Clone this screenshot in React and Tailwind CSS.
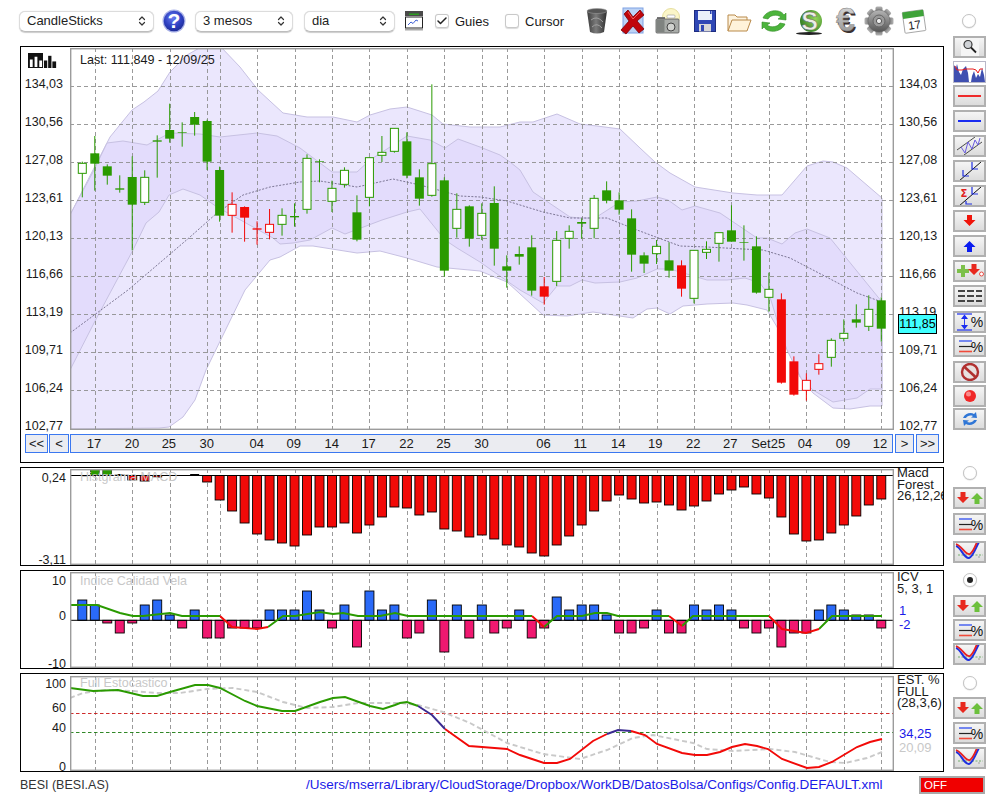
import React from "react";
import { ChevronsUpDown, Check } from "lucide-react";

const GREEN = "#2a9a00";
const RED = "#f20a08";
const barX = (i) => 82.3 + 12.484 * i;

// candles as read at 3x: wick top, body top, body bottom, wick bottom, kind
const rawA = [
  [305,310,340,412,"gh"],[228,280,311,392,"gf"],[313,319,347,374,"gf"],[346,385,389,398,"gf"],
  [289,351,434,571,"gf"],[331,352,427,435,"gh"],[226,241,245,353,"gf"],[131,210,236,248,"gf"],
  [187,216,218,260,"gf"],[156,171,194,227,"gf"],[179,183,305,330,"gf"],[320,330,467,485,"gf"],
  [397,433,466,518,"rh"],[439,441,473,545,"rf"],[484,505,509,554,"rf"],[447,493,517,538,"rh"],
  [445,466,493,527,"gh"],[430,468,472,500,"gf"],[283,295,448,461,"gh"],[298,303,305,367,"gf"],
  [362,385,424,456,"gh"],[322,331,373,383,"gh"],[406,457,539,544,"gf"],[292,293,412,439,"gh"],
  [228,277,286,306,"gh"],[205,205,274,278,"gh"],[217,244,347,355,"gf"],[328,352,416,437,"gf"],
  [73,311,406,410,"gh"],[352,361,632,650,"gf"],[400,448,505,533,"gh"],[436,439,536,560,"gf"],
].map((c) => [60 + c[0] / 3, 60 + c[1] / 3, 60 + c[2] / 3, 60 + c[3] / 3, c[4]]);

const rawB = [
  [130,160,226,240,"gh"],[79,129,266,317,"gf"],[286,319,332,383,"gf"],[259,282,290,314,"gf"],
  [226,262,392,407,"gf"],[351,379,410,434,"rf"],[213,241,364,378,"gh"],[196,214,235,266,"gh"],
  [175,186,191,236,"gf"],[105,115,205,235,"gh"],[64,91,122,130,"gf"],[97,121,149,164,"gf"],
  [148,175,284,335,"gf"],[277,286,311,339,"gf"],[240,259,281,312,"gh"],[247,301,332,353,"gf"],
  [301,316,386,410,"rf"],[270,271,415,430,"gh"],[244,268,277,297,"gh"],[217,218,250,305,"gh"],
  [136,211,245,245,"gf"],[196,246,248,302,"gf"],[229,259,398,401,"gf"],[338,388,412,455,"gh"],
  [400,418,668,671,"rf"],[589,604,704,707,"rf"],[640,661,691,722,"rh"],[583,611,628,644,"rh"],
  [535,541,592,620,"gh"],[478,520,535,544,"gh"],[433,478,488,503,"gf"],[406,448,499,513,"gh"],
  [412,421,506,545,"gf"],
].map((c) => [160 + c[0] / 3, 160 + c[1] / 3, 160 + c[2] / 3, 160 + c[3] / 3, c[4]]);

const candles = [...rawA, ...rawB];

const outerUp = [[70,215],[93,170],[110,137],[132,110],[144,102],[158,91],[170,72],[187,55],[203,46],[220,46],[240,67],[258,90],[283,113],[307,117],[333,117],[357,122],[370,115],[390,109],[407,107],[432,115],[443,124],[470,127],[500,127],[520,122],[533,122],[557,114],[580,124],[597,126],[620,129],[640,148],[655,162],[670,173],[695,187],[733,193],[757,195],[782,195],[807,166],[823,161],[833,162],[847,168],[882,198]];
const outerLow = [[70,429],[159,428],[169,427],[183,417],[195,400],[206,370],[245,290],[270,260],[280,257],[300,246],[313,246],[357,253],[380,251],[407,258],[437,267],[480,271],[507,282],[543,315],[567,316],[593,312],[633,318],[647,309],[657,308],[670,314],[683,306],[707,304],[733,303],[747,305],[767,310],[777,327],[800,377],[813,393],[833,408],[850,409],[870,406],[882,406]];
const innerUp = [[70,215],[93,172],[107,143],[123,141],[147,145],[170,133],[200,134],[220,137],[257,133],[277,136],[300,148],[332,172],[357,172],[370,160],[407,136],[430,140],[445,148],[458,139],[480,147],[500,155],[510,162],[520,170],[533,192],[570,217],[580,218],[595,218],[620,202],[637,201],[657,197],[668,200],[682,210],[695,206],[720,213],[757,238],[767,238],[782,244],[795,233],[807,229],[830,238],[882,302]];
const innerLow = [[70,370],[94,323],[133,250],[146,223],[159,212],[169,195],[183,189],[200,195],[217,207],[273,238],[280,244],[293,243],[310,240],[332,228],[345,234],[382,220],[407,212],[420,209],[445,240],[457,248],[480,262],[507,281],[520,290],[543,303],[557,286],[570,286],[582,280],[595,283],[620,282],[637,278],[657,269],[670,269],[690,275],[707,280],[727,280],[745,278],[760,283],[770,297],[777,320],[787,350],[802,380],[813,390],[833,402],[857,398],[870,389],[882,389]];
const midLine = [[70,333],[128,290],[190,237],[217,213],[243,195],[270,187],[300,182],[320,181],[357,187],[393,179],[420,185],[460,196],[480,197],[507,201],[543,212],[570,218],[607,218],[637,230],[680,246],[707,247],[743,249],[763,250],[790,258],[813,270],[857,293],[882,302]];

const pts = (a) => a.map((p) => p.join(",")).join(" ");
const loop = (a, b) => pts([...a, ...[...b].reverse()]);

const gridX = [1,4,7,10,11,14,17,20,23,26,29,32,34,37,40,43,46,49,52,55,58,61,64].map((i) => Math.round(barX(i)) + 0.5);

const macd = [475,469,469,474,480,481,477,475,475,474,482,500,511,523,534,540,543,546,535,527,527,523,533,525,517,507,508,515,512,529,531,537,535,539,545,547,553,556,545,536,525,511,501,495,499,503,502,505,510,506,501,494,490,487,494,498,517,534,541,540,533,525,516,505,499];
const icv = [600,605,623,633,623,605,600,615,628,610,638,638,628,628,628,610,610,610,591,610,628,605,647,591,610,605,638,633,600,652,605,638,605,633,628,610,638,628,597,610,605,605,615,633,633,628,610,633,633,605,610,605,610,628,633,628,647,633,633,610,605,610,615,615,628];

const icvGreen = [
  [[70,605],[97,605],[120,613],[133,616],[143,616],[170,613],[182,616],[220,616]],
  [[268,627],[283,616],[295,616],[320,612],[333,614],[343,613],[358,616],[380,616],[395,613],[408,616],[532,616]],
  [[544,627],[557,616],[582,616],[595,613],[607,613],[618,616],[669,616]],
  [[682,626],[693,616],[769,616]],
  [[819,629],[832,616],[882,616]],
];
const icvRed = [
  [[220,616],[232,627],[257,629],[268,627]],
  [[532,616],[544,627]],
  [[669,616],[682,626]],
  [[769,616],[782,629],[806,633],[819,629]],
];

const stochGray = [[70,698],[83,693],[107,690],[132,691],[157,693],[180,693],[207,689],[233,688],[257,692],[283,702],[307,708],[333,707],[358,703],[383,703],[400,703],[418,705],[443,712],[470,723],[507,743],[543,754],[580,759],[607,750],[633,738],[653,735],[693,743],[707,749],[733,751],[770,749],[795,752],[830,762],[845,763],[867,758],[882,752]];
const stochGreen = [[70,688],[93,691],[118,690],[143,696],[157,696],[170,692],[195,685],[208,685],[220,688],[245,701],[257,706],[282,711],[295,711],[320,702],[333,698],[345,697],[370,706],[383,709],[395,705],[400,703],[407,702],[418,706]];
const stochBlue1 = [[418,706],[432,715],[445,729]];
const stochRed1 = [[445,729],[469,746],[482,747],[507,749],[520,755],[544,763],[557,763],[570,759],[593,741],[607,734]];
const stochBlue2 = [[607,734],[618,730],[631,731]];
const stochRed2 = [[631,731],[645,735],[657,744],[682,753],[695,755],[707,755],[720,752],[732,747],[745,744],[757,746],[768,749],[782,759],[807,768],[819,767],[832,762],[857,747],[870,742],[882,739]];

const dates = [["17",94],["20",132],["25",169],["30",207],["04",257],["09",294],["14",332],["17",369],["22",407],["25",444],["30",482],["06",544],["11",581],["14",619],["19",656],["22",694],["27",731],["Set25",769],["04",806],["09",844],["12",881]];
const prices = ["134,03","130,56","127,08","123,61","120,13","116,66","113,19","109,71","106,24","102,77"];

function VGrid({ y1, y2 }) {
  return gridX.map((x, i) => (
    <line key={i} x1={x} x2={x} y1={y1} y2={y2} stroke="#8f8f8f" strokeWidth="0.9" strokeDasharray="4 3" />
  ));
}

function MainPlot() {
  return (
    <svg viewBox="70 48 824 382" className="block w-[824px] h-[382px]">
      <polygon points={loop(outerUp, outerLow)} fill="#ebe7fd" stroke="#c7c1e2" />
      <polygon points={loop(innerUp, innerLow)} fill="#e3dcfc" stroke="#c7c1e2" />
      {[86,124,162,200,238,276,314,352,390].map((y) => (
        <line key={y} x1="70" x2="894" y1={y + 0.5} y2={y + 0.5} stroke="#8f8f8f" strokeWidth="0.9" strokeDasharray="4 3" />
      ))}
      <VGrid y1={48} y2={430} />
      <polyline points={pts(midLine)} fill="none" stroke="#6f6a88" strokeWidth="0.9" strokeDasharray="2 1.5" />
      {candles.map((c, i) => {
        const x = barX(i);
        const color = c[4][0] === "g" ? GREEN : RED;
        const hollow = c[4][1] === "h";
        return (
          <g key={i}>
            <line x1={x} x2={x} y1={c[0]} y2={c[3]} stroke={color} strokeWidth="1" />
            {hollow ? (
              <rect x={x - 4} y={c[1]} width="8" height={c[2] - c[1]} fill="#fff" stroke={color} strokeWidth="1" />
            ) : (
              <rect x={x - 4.5} y={c[1]} width="9" height={c[2] - c[1]} fill={color} />
            )}
          </g>
        );
      })}
      <rect x="70.7" y="48.7" width="822.6" height="380.6" fill="none" stroke="#9c9c9c" strokeWidth="1.4" />
    </svg>
  );
}

function MacdPlot() {
  return (
    <svg viewBox="70 469 824 96" className="block w-[824px] h-[96px]">
      <VGrid y1={469} y2={565} />
      {macd.map((y, i) => {
        const x = barX(i) - 4.5;
        if (y === 475) return null;
        if (y === 474) return <rect key={i} x={x} y="474" width="9" height="1.5" fill="#000" />;
        if (y < 475) return <rect key={i} x={x} y={y} width="9" height={475.5 - y} fill={GREEN} stroke="#111" strokeWidth="0.5" />;
        return <rect key={i} x={x} y="475.5" width="9" height={y - 475.5} fill={RED} stroke="#000" strokeWidth="0.9" />;
      })}
      <line x1="70" x2="894" y1="475.5" y2="475.5" stroke="#000" strokeWidth="1" />
      <rect x="70.7" y="469.7" width="822.6" height="94.6" fill="none" stroke="#9c9c9c" strokeWidth="1.4" />
    </svg>
  );
}

function IcvPlot() {
  return (
    <svg viewBox="70 572 824 96" className="block w-[824px] h-[96px]">
      <VGrid y1={572} y2={668} />
      {icv.map((y, i) => {
        const x = barX(i) - 4.5;
        return y < 620 ? (
          <rect key={i} x={x} y={y} width="9" height={620.3 - y} fill="#2a6af8" stroke="#000" strokeWidth="0.9" />
        ) : (
          <rect key={i} x={x} y="620.3" width="9" height={y - 620.3} fill="#f01870" stroke="#000" strokeWidth="0.9" />
        );
      })}
      <line x1="70" x2="894" y1="620.3" y2="620.3" stroke="#000" strokeWidth="1" />
      {icvGreen.map((l, i) => (
        <polyline key={i} points={pts(l)} fill="none" stroke={GREEN} strokeWidth="1.9" />
      ))}
      {icvRed.map((l, i) => (
        <polyline key={i} points={pts(l)} fill="none" stroke={RED} strokeWidth="1.9" />
      ))}
      <rect x="70.7" y="572.7" width="822.6" height="94.6" fill="none" stroke="#9c9c9c" strokeWidth="1.4" />
    </svg>
  );
}

function StochPlot() {
  return (
    <svg viewBox="70 676 824 95" className="block w-[824px] h-[95px]">
      <VGrid y1={676} y2={771} />
      <line x1="70" x2="894" y1="713.5" y2="713.5" stroke="#c81414" strokeWidth="0.9" strokeDasharray="3.5 2.5" />
      <line x1="70" x2="894" y1="732.5" y2="732.5" stroke="#1a7a10" strokeWidth="0.9" strokeDasharray="3.5 2.5" />
      <polyline points={pts(stochGray)} fill="none" stroke="#c9c9c9" strokeWidth="1.9" strokeDasharray="5 3" />
      <polyline points={pts(stochGreen)} fill="none" stroke={GREEN} strokeWidth="1.9" />
      <polyline points={pts(stochBlue1)} fill="none" stroke="#3a2a90" strokeWidth="1.9" />
      <polyline points={pts(stochRed1)} fill="none" stroke={RED} strokeWidth="1.9" />
      <polyline points={pts(stochBlue2)} fill="none" stroke="#3a2a90" strokeWidth="1.9" />
      <polyline points={pts(stochRed2)} fill="none" stroke={RED} strokeWidth="1.9" />
      <rect x="70.7" y="676.7" width="822.6" height="93.6" fill="none" stroke="#9c9c9c" strokeWidth="1.4" />
    </svg>
  );
}

function DateBar() {
  const cells = dates.map((d, i) => {
    const left = i === 0 ? 70 : (dates[i - 1][1] + d[1]) / 2;
    const right = i === dates.length - 1 ? 893 : (d[1] + dates[i + 1][1]) / 2;
    return { label: d[0], x: d[1], left, right };
  });
  return (
    <div className="ml-px w-[823px] h-[19px] border border-[#3b78f0] bg-[#ebecf1] flex">
      {cells.map((c, i) => {
        // keep the label centred on its tick even where the cell is not symmetric
        const half = Math.min(c.x - c.left, c.right - c.x);
        return (
          <React.Fragment key={i}>
            <span style={{ width: c.x - c.left - half - (i === 0 ? 1 : 0) }} />
            <span style={{ width: half * 2 }} className="text-center leading-[18px]">{c.label}</span>
            <span style={{ width: c.right - c.x - half }} />
          </React.Fragment>
        );
      })}
    </div>
  );
}

function NavBtn({ className, children }) {
  return (
    <div className={`h-[19px] border border-[#3b78f0] bg-[#ebecf1] text-center leading-[18px] ${className}`}>{children}</div>
  );
}

function Select({ className, children }) {
  return (
    <div className={`h-[21px] flex items-center justify-between pl-[7px] pr-[5px] bg-white border border-[#dcdcdc] border-b-[#bdbdbd] rounded-[6px] shadow-[0_0.5px_1px_rgba(0,0,0,0.2)] text-[#222] ${className}`}>
      <span>{children}</span>
      <ChevronsUpDown size={12} strokeWidth={2.4} className="text-[#333]" />
    </div>
  );
}

function CheckBox({ on }) {
  return (
    <div className="w-[14px] h-[14px] rounded-[3px] bg-white border border-[#c9c9c9] shadow-[0_0.5px_1px_rgba(0,0,0,0.15)] flex items-center justify-center">
      {on && <Check size={12} strokeWidth={3} className="text-[#222]" />}
    </div>
  );
}

function Radio({ on, className }) {
  return (
    <div className={`w-[14px] h-[14px] rounded-full bg-white border border-[#c4c4c4] shadow-[0_0.5px_1px_rgba(0,0,0,0.15)] flex items-center justify-center ${className}`}>
      {on && <div className="w-[6px] h-[6px] rounded-full bg-[#222]" />}
    </div>
  );
}

/* ---- toolbar icons ---- */
function HelpIcon() {
  return (
    <svg viewBox="0 0 24 24" className="ml-[8px] w-[24px] h-[24px] shrink-0">
      <defs>
        <radialGradient id="helpG" cx="45%" cy="35%" r="70%">
          <stop offset="0%" stopColor="#6a7cf0" />
          <stop offset="60%" stopColor="#2d3fc0" />
          <stop offset="100%" stopColor="#1c2a90" />
        </radialGradient>
      </defs>
      <circle cx="12" cy="12" r="11.5" fill="#a9b2e8" />
      <circle cx="12" cy="12" r="10.3" fill="url(#helpG)" />
      <text x="12" y="19" textAnchor="middle" fontSize="21" fontWeight="700" fill="#fff" fontFamily="Liberation Sans">?</text>
    </svg>
  );
}

function ChartWinIcon() {
  return (
    <svg viewBox="0 0 18 20" className="ml-[10px] w-[18px] h-[20px] shrink-0">
      <rect x="0" y="0" width="18" height="5" fill="#4a4a4a" />
      <rect x="4" y="2.5" width="10" height="1.5" fill="#2c9c20" />
      <rect x="0.5" y="6" width="17" height="11" fill="#fff" stroke="#222" />
      <polyline points="3,14 6,11 8,12.5 11,9 13,10" fill="none" stroke="#2a4fd0" strokeWidth="0.9" />
      <rect x="0" y="18" width="18" height="1.5" fill="#aaa" />
    </svg>
  );
}

function TrashIcon({ className }) {
  return (
    <svg viewBox="0 0 28 28" className={`w-[28px] h-[28px] shrink-0 ${className}`}>
      <defs>
        <linearGradient id="trashG" x1="0" x2="1" y1="0" y2="0">
          <stop offset="0%" stopColor="#3c3c3c" />
          <stop offset="45%" stopColor="#7b7b7b" />
          <stop offset="100%" stopColor="#2e2e2e" />
        </linearGradient>
      </defs>
      <path d="M4 4 Q14 0 24 4 L21 25 Q14 28 7 25 Z" fill="url(#trashG)" />
      <ellipse cx="14" cy="4" rx="10" ry="2.5" fill="#565656" stroke="#9a9a9a" strokeWidth="0.6" />
      <path d="M8 13 Q14 8 20 15 M9 20 Q14 15 19 21" stroke="#a0a0a0" strokeWidth="1" fill="none" />
    </svg>
  );
}

function CloseDocIcon({ className }) {
  return (
    <svg viewBox="0 0 28 28" className={`w-[28px] h-[28px] shrink-0 ${className}`}>
      <rect x="4" y="1" width="20" height="25" fill="#bcd2f5" stroke="#7fa2e4" />
      <path d="M5 7 L9 3 L14 10 L21 3 L25 8 L18 14 L25 22 L20 26 L14 19 L7 27 L2 23 L10 14 Z" fill="#c0060c" stroke="#7d0006" strokeWidth="0.8" />
      <path d="M9 5 L14 12 L21 5" fill="none" stroke="#ef5a5a" strokeWidth="1" />
    </svg>
  );
}

function CameraIcon({ className }) {
  return (
    <svg viewBox="0 0 28 28" className={`w-[28px] h-[28px] shrink-0 ${className}`}>
      <circle cx="17" cy="10" r="8.5" fill="#fbf6c8" stroke="#e6dfa0" />
      <rect x="3" y="10" width="8" height="3" fill="#777" />
      <rect x="2" y="12" width="23" height="14" rx="1" fill="#a9aca9" stroke="#555" strokeWidth="0.8" />
      <rect x="2.5" y="13" width="8" height="12" fill="#7f8380" />
      <circle cx="17" cy="20" r="4" fill="#d0d2cf" stroke="#444" />
      <rect x="13" y="8" width="8" height="3" rx="1" fill="#fff" stroke="#999" strokeWidth="0.6" />
    </svg>
  );
}

function FloppyIcon({ className }) {
  return (
    <svg viewBox="0 0 28 28" className={`w-[28px] h-[28px] shrink-0 ${className}`}>
      <rect x="3.5" y="3.5" width="21" height="21" fill="#2f47b5" stroke="#1d2b80" />
      <rect x="7" y="4" width="14" height="9" fill="#eaf0fa" />
      <rect x="19" y="4" width="1.5" height="3" fill="#2f47b5" />
      <rect x="8" y="17" width="12" height="7.5" fill="#d7d7d7" />
      <rect x="10" y="18" width="3" height="6" fill="#2f47b5" />
    </svg>
  );
}

function FolderIcon({ className }) {
  return (
    <svg viewBox="0 0 28 28" className={`w-[28px] h-[28px] shrink-0 ${className}`}>
      <path d="M3 24 L3 8 L10 8 L12 10 L22 10 L22 13" fill="#fdf3df" stroke="#b98a4a" strokeWidth="1" />
      <path d="M3 24 L7 13 L26 13 L22 24 Z" fill="#fff3da" stroke="#b98a4a" strokeWidth="1" />
    </svg>
  );
}

function RefreshIcon({ className }) {
  return (
    <svg viewBox="0 0 28 28" className={`w-[28px] h-[28px] shrink-0 ${className}`}>
      <path d="M3 11 C6 3 20 1 24 8 L26 6 L26 13 L18 12 L21 10 C17 7 10 8 8 12 Z" fill="#4cb43c" stroke="#2f8a24" strokeWidth="0.6" />
      <path d="M25 17 C22 25 8 27 4 20 L2 22 L2 15 L10 16 L7 18 C11 21 18 20 20 16 Z" fill="#4cb43c" stroke="#2f8a24" strokeWidth="0.6" />
    </svg>
  );
}

function MoneyIcon({ className }) {
  return (
    <svg viewBox="0 0 28 28" className={`w-[28px] h-[28px] shrink-0 ${className}`}>
      <defs>
        <radialGradient id="moneyG" cx="70%" cy="40%" r="75%">
          <stop offset="0%" stopColor="#92d45a" />
          <stop offset="100%" stopColor="#2f7a22" />
        </radialGradient>
      </defs>
      <ellipse cx="13" cy="26.5" rx="13" ry="1.4" fill="#222" />
      <circle cx="15" cy="14" r="11" fill="url(#moneyG)" />
      <text x="13.5" y="23" textAnchor="middle" fontSize="25" fontWeight="700" fill="#eceee8" stroke="#666" strokeWidth="0.5" fontFamily="Liberation Sans">S</text>
    </svg>
  );
}

function EuroIcon({ className }) {
  return (
    <svg viewBox="0 0 28 28" className={`w-[28px] h-[28px] shrink-0 overflow-visible ${className}`}>
      <defs>
        <linearGradient id="euroG" x1="0" x2="0" y1="0" y2="1">
          <stop offset="0%" stopColor="#e4e4e4" />
          <stop offset="100%" stopColor="#8a8a8a" />
        </linearGradient>
      </defs>
      <text x="15" y="25.5" textAnchor="middle" fontSize="34" fontWeight="700" fill="#3a2f2f" fontFamily="Liberation Sans">€</text>
      <text x="13.5" y="24" textAnchor="middle" fontSize="34" fontWeight="700" fill="url(#euroG)" stroke="#777" strokeWidth="0.4" fontFamily="Liberation Sans">€</text>
    </svg>
  );
}

function GearIcon({ className }) {
  const teeth = [0, 45, 90, 135, 180, 225, 270, 315];
  return (
    <svg viewBox="0 0 30 30" className={`w-[30px] h-[30px] shrink-0 ${className}`}>
      <defs>
        <linearGradient id="gearG" x1="0" x2="0" y1="0" y2="1">
          <stop offset="0%" stopColor="#b5b5b5" />
          <stop offset="100%" stopColor="#555" />
        </linearGradient>
      </defs>
      {teeth.map((a) => (
        <rect key={a} x="11.5" y="0.5" width="7" height="7" rx="1.5" fill="url(#gearG)" transform={`rotate(${a} 15 15)`} />
      ))}
      <circle cx="15" cy="15" r="11" fill="url(#gearG)" stroke="#666" strokeWidth="0.5" />
      <circle cx="15" cy="15" r="6" fill="#9a9a9a" stroke="#666" />
      <circle cx="15" cy="15" r="2.6" fill="#eee" stroke="#555" />
    </svg>
  );
}

function CalendarIcon({ className }) {
  return (
    <svg viewBox="0 0 28 28" className={`w-[28px] h-[28px] shrink-0 ${className}`}>
      <g transform="rotate(-8 14 14)">
        <rect x="3.5" y="4" width="21" height="21" rx="1" fill="#fff" stroke="#888" strokeWidth="0.7" />
        <rect x="3.5" y="4" width="21" height="6.5" fill="#3fa33a" />
        <text x="14" y="22" textAnchor="middle" fontSize="11.5" fill="#222" fontFamily="Liberation Sans">17</text>
      </g>
    </svg>
  );
}

function BarsLogo() {
  return (
    <svg viewBox="0 0 32 16" className="block ml-[6px] mt-[6px] w-[32px] h-[15px]">
      <path d="M0 0 H16 V16 H0 Z M2 15 H5 V7 H2 Z M7 15 H10 V4 H7 Z M12 15 H15 V8 H12 Z" fill="#111" fillRule="evenodd" />
      <rect x="17" y="8" width="3.5" height="8" fill="#111" />
      <rect x="21.5" y="3" width="3.5" height="13" fill="#111" />
      <rect x="26" y="9" width="4" height="7" fill="#111" />
    </svg>
  );
}

/* ---- side buttons, drawn on 29x18 ---- */
const down = (x, y, c) => <path d={`M${x - 2.5} ${y - 5} H${x + 2.5} V${y} H${x + 6} L${x} ${y + 6} L${x - 6} ${y} H${x - 2.5} Z`} fill={c} />;
const up = (x, y, c) => <path d={`M${x - 2.5} ${y + 5} H${x + 2.5} V${y} H${x + 6} L${x} ${y - 6} L${x - 6} ${y} H${x - 2.5} Z`} fill={c} />;

const LinesPct = (
  <>
    <line x1="4" x2="17" y1="4" y2="4" stroke="#2040f0" strokeWidth="1.2" />
    <line x1="4" x2="17" y1="9.5" y2="9.5" stroke="#222" strokeWidth="1.2" />
    <line x1="4" x2="17" y1="14.5" y2="14.5" stroke="#f04a3a" strokeWidth="1.6" />
    <text x="22" y="15" textAnchor="middle" fontSize="14" fill="#111" fontFamily="Liberation Sans">%</text>
  </>
);
const ArrowsDU = (
  <>
    {down(8, 8, "#e8281e")}
    {up(22, 10, "#6cc03c")}
  </>
);
const Curves = (
  <>
    <line x1="3" x2="28" y1="12" y2="12" stroke="#2a8a20" strokeWidth="0.6" strokeDasharray="2 1.5" />
    <path d="M1 3 C6 4 9 16 14 15 C18 14 21 4 24 -1" fill="none" stroke="#2030e0" strokeWidth="2" />
    <path d="M1 1 C7 3 11 13 15 11 C18 9 20 4 22 -1" fill="none" stroke="#e82020" strokeWidth="1.8" />
    <line x1="24" x2="24" y1="13" y2="15" stroke="#777" strokeWidth="0.6" />
  </>
);

const sideIcons = {
  mag: (
    <>
      <rect x="6" y="0" width="18" height="18" fill="#f5f5f5" />
      <circle cx="13" cy="6.5" r="4" fill="#cfd2d6" stroke="#3a3a3a" strokeWidth="1.2" />
      <line x1="16" y1="9.5" x2="21" y2="14.5" stroke="#222" strokeWidth="1.8" />
    </>
  ),
  red: <line x1="3" x2="26" y1="9" y2="9" stroke="#ef2b2b" strokeWidth="2" />,
  blue: <line x1="3" x2="26" y1="9" y2="9" stroke="#1a2cf0" strokeWidth="2" />,
  chan: (
    <>
      <line x1="2" y1="13" x2="20" y2="0" stroke="#222" strokeWidth="0.8" />
      <line x1="9" y1="18" x2="27" y2="5" stroke="#222" strokeWidth="0.8" />
      <polyline points="6,10 10,16 13,5 17,12 20,3 23,8 25,1" fill="none" stroke="#6a5ce0" strokeWidth="1" />
    </>
  ),
  fib: (
    <>
      <line x1="4" y1="19" x2="26" y2="0" stroke="#111" strokeWidth="1" />
      <path d="M8 8 V14 H14 M17 0 V7 H23" fill="none" stroke="#2030e0" strokeWidth="1.2" />
    </>
  ),
  sig: (
    <>
      <line x1="4" y1="19" x2="26" y2="0" stroke="#111" strokeWidth="1" />
      <path d="M17 0 V7 H23" fill="none" stroke="#2030e0" strokeWidth="1.2" />
      <path d="M11 14 V17 H17" fill="none" stroke="#2030e0" strokeWidth="1.2" />
      <text x="9" y="10" textAnchor="middle" fontSize="10" fontWeight="700" fill="#e02020" fontFamily="DejaVu Sans">Σ</text>
    </>
  ),
  dn: down(14.5, 8, "#f0140a"),
  upb: up(14.5, 10, "#0a1cf0"),
  plus: (
    <>
      <path d="M6 3 H10 V7 H14 V11 H10 V15 H6 V11 H2 V7 H6 Z" fill="#7cc04a" />
      {down(19, 7, "#e8281e")}
      <circle cx="26.5" cy="12" r="2" fill="#fff" stroke="#e8281e" strokeWidth="0.8" />
    </>
  ),
  dash: (
    <g stroke="#444" strokeWidth="2" strokeDasharray="7 2">
      <line x1="3" x2="27" y1="4" y2="4" />
      <line x1="3" x2="27" y1="9" y2="9" />
      <line x1="3" x2="27" y1="14" y2="14" />
    </g>
  ),
  range: (
    <>
      <line x1="2" x2="17" y1="1" y2="1" stroke="#1a2cf0" strokeWidth="1.2" />
      <line x1="2" x2="17" y1="17" y2="17" stroke="#1a2cf0" strokeWidth="1.2" />
      <line x1="9.5" x2="9.5" y1="3" y2="15" stroke="#1a2cf0" strokeWidth="0.9" />
      <path d="M9.5 1.5 L13 6 H6 Z M9.5 16.5 L13 12 H6 Z" fill="#1a2cf0" />
      <text x="22" y="14" textAnchor="middle" fontSize="14" fill="#111" fontFamily="Liberation Sans">%</text>
    </>
  ),
  lines: LinesPct,
  stop: (
    <>
      <rect x="6" y="0" width="19" height="18" fill="#e6e6ee" />
      <circle cx="15" cy="9" r="8" fill="#e8e0e0" stroke="#b03030" strokeWidth="2.4" />
      <line x1="9.5" y1="4" x2="20.5" y2="14" stroke="#b03030" strokeWidth="2.6" />
    </>
  ),
  dot: (
    <>
      <circle cx="15" cy="9" r="6" fill="#f02828" />
      <circle cx="13.5" cy="7" r="2.5" fill="#fa8a8a" />
    </>
  ),
  sync: (
    <>
      <path d="M8 8 C10 3 16 2 19 4 L21 2 L22 8 L16 7.5 L18 6 C15 5 12 6 11 8 Z" fill="#2f76d6" />
      <path d="M22 10 C20 15 14 16 11 14 L9 16 L8 10 L14 10.5 L12 12 C15 13 18 12 19 10 Z" fill="#2f76d6" />
    </>
  ),
  arrows: ArrowsDU,
  curves: Curves,
};

function SideBtn({ icon, className = "" }) {
  return (
    <div className={`w-[33px] h-[22px] border-2 border-[#b0b0b0] bg-gradient-to-b from-[#f5f5f5] to-[#dcdcdc] shrink-0 ${className}`}>
      <svg viewBox="0 0 29 18" className="block w-[29px] h-[18px]">{sideIcons[icon]}</svg>
    </div>
  );
}

function SpectrumBtn({ className = "" }) {
  return (
    <div className={`w-[33px] h-[22px] border border-[#b8b8c8] bg-white shrink-0 ${className}`}>
      <svg viewBox="0 0 31 20" className="block w-[31px] h-[20px]">
        <path d="M0 20 V3 L2 6 L3 2 L5 10 L7 13 L9 7 L12 4 L14 11 L15 20 Z" fill="#3f4fb0" />
        <path d="M17 20 L18 14 L20 9 L22 16 L24 12 L26 15 L28 6 L30 13 L31 20 Z" fill="#3f4fb0" />
        <path d="M1 4 L3 8 L8 8 L12 7 L16 7 L19 7 L22 8 L24 11 L26 7 L29 7" fill="none" stroke="#e81c1c" strokeWidth="1" />
      </svg>
    </div>
  );
}

function Panel({ className, children }) {
  return <div className={`ml-[20px] w-[924px] border border-black flex overflow-hidden shrink-0 ${className}`}>{children}</div>;
}

export default function App() {
  return (
    <div className="w-[1000px] h-[800px] bg-white text-[13px] text-[#1a1a1a] overflow-hidden font-['Liberation_Sans',sans-serif]">
      {/* ===== Toolbar ===== */}
      <div className="h-[32px] pt-[10px] pl-[19px] pr-[24px] flex items-center">
        <Select className="w-[135px]">CandleSticks</Select>
        <HelpIcon />
        <Select className="ml-[9px] w-[98px]">3 mesos</Select>
        <Select className="ml-[11px] w-[91px]">dia</Select>
        <ChartWinIcon />
        <div className="ml-[12px] flex items-center w-[70px]">
          <CheckBox on />
          <span className="ml-[6px] mt-[2px]">Guies</span>
        </div>
        <div className="flex items-center w-[78px]">
          <CheckBox />
          <span className="ml-[6px] mt-[2px]">Cursor</span>
        </div>
        <TrashIcon />
        <CloseDocIcon className="ml-[8px]" />
        <CameraIcon className="ml-[7px]" />
        <FloppyIcon className="ml-[9px]" />
        <FolderIcon className="ml-[6px]" />
        <RefreshIcon className="ml-[7px]" />
        <MoneyIcon className="ml-[8px]" />
        <EuroIcon className="ml-[8px]" />
        <GearIcon className="ml-[4px]" />
        <CalendarIcon className="ml-[6px]" />
        <Radio className="ml-auto" />
      </div>

      {/* ===== Price chart ===== */}
      <div className="flex h-[435px]">
        <div className="pt-[14px]">
          <Panel className="h-[417px] flex-col">
            <div className="flex h-[383px] shrink-0">
              <div className="w-[49px] shrink-0 text-[12.5px]">
                <BarsLogo />
                <div className="-mt-[3px]">
                  {prices.map((p) => (
                    <div key={p} className="h-[38px] pr-[7px] flex items-center justify-end">{p}</div>
                  ))}
                </div>
              </div>
              <div className="relative mt-px w-[824px] h-[382px] shrink-0">
                <MainPlot />
                <span className="absolute left-[10px] top-[3px] text-[12.6px]">Last: 111.849 - 12/09/25</span>
              </div>
              <div className="relative flex-1 pt-[18px] pl-[5px] text-[12.5px]">
                {prices.map((p) => (
                  <div key={p} className="h-[38px] flex items-center">{p}</div>
                ))}
                <div className="absolute left-[4px] top-[267px] w-[39px] h-[20px] bg-[#40ffff] border border-black text-center leading-[18px] text-black">111,85</div>
              </div>
            </div>
            <div className="flex mt-[4px]">
              <NavBtn className="ml-[4px] w-[23px]">&lt;&lt;</NavBtn>
              <NavBtn className="ml-px w-[20px]">&lt;</NavBtn>
              <DateBar />
              <NavBtn className="ml-[2px] w-[19px]">&gt;</NavBtn>
              <NavBtn className="ml-[2px] w-[23px]">&gt;&gt;</NavBtn>
            </div>
          </Panel>
        </div>
        <div className="ml-[9px] pt-[4px] flex flex-col">
          <SideBtn icon="mag" />
          <SpectrumBtn className="mt-[3px]" />
          <SideBtn icon="red" className="mt-[2px]" />
          <SideBtn icon="blue" className="mt-[3px]" />
          <SideBtn icon="chan" className="mt-[3px]" />
          <SideBtn icon="fib" className="mt-[3px]" />
          <SideBtn icon="sig" className="mt-[3px]" />
          <SideBtn icon="dn" className="mt-[3px]" />
          <SideBtn icon="upb" className="mt-[3px]" />
          <SideBtn icon="plus" className="mt-[3px]" />
          <SideBtn icon="dash" className="mt-[3px]" />
          <SideBtn icon="range" className="mt-[4px]" />
          <SideBtn icon="lines" className="mt-[2px]" />
          <SideBtn icon="stop" className="mt-[4px]" />
          <SideBtn icon="dot" className="mt-[2px]" />
          <SideBtn icon="sync" className="mt-px" />
        </div>
      </div>

      {/* ===== MACD ===== */}
      <div className="flex h-[103px]">
        <Panel className="h-[99px]">
          <div className="w-[49px] shrink-0 pr-[4px] text-right text-[12.5px]">
            <div className="mt-[3px] leading-[14px]">0,24</div>
            <div className="mt-[69px] leading-[12px]">-3,11</div>
          </div>
          <div className="relative mt-px w-[824px] h-[96px] shrink-0">
            <MacdPlot />
            <span className="absolute left-[10px] -top-px text-[12.5px] text-[#c8c8c8]">Histgrama MACD</span>
          </div>
          <div className="pl-[3px] -mt-px leading-[11.5px] whitespace-nowrap">
            <div>Macd</div>
            <div>Forest</div>
            <div>26,12,26</div>
          </div>
        </Panel>
        <div className="ml-[9px] flex flex-col items-center">
          <Radio className="-mt-px" />
          <SideBtn icon="arrows" className="mt-[7px]" />
          <SideBtn icon="lines" className="mt-[4px]" />
          <SideBtn icon="curves" className="mt-[6px]" />
        </div>
      </div>

      {/* ===== ICV ===== */}
      <div className="flex h-[103px]">
        <Panel className="h-[99px]">
          <div className="w-[49px] shrink-0 pr-[4px] text-right text-[12.5px]">
            <div className="mt-[3px] leading-[14px]">10</div>
            <div className="mt-[21px] leading-[14px]">0</div>
            <div className="mt-[35px] leading-[12px]">-10</div>
          </div>
          <div className="relative mt-px w-[824px] h-[96px] shrink-0">
            <IcvPlot />
            <span className="absolute left-[10px] top-0 text-[12.5px] text-[#c8c8c8]">Indice Calidad Vela</span>
          </div>
          <div className="pl-[3px] leading-[11.5px] whitespace-nowrap">
            <div>ICV</div>
            <div>5, 3, 1</div>
            <div className="mt-[10px] ml-[2px] leading-[14px] text-[#1a1ae8]">1</div>
            <div className="ml-[2px] leading-[14px] text-[#1a1ae8]">-2</div>
          </div>
        </Panel>
        <div className="ml-[9px] flex flex-col items-center">
          <Radio on className="mt-[3px]" />
          <SideBtn icon="arrows" className="mt-[8px]" />
          <SideBtn icon="lines" className="mt-[2px]" />
          <SideBtn icon="curves" className="mt-[2px]" />
        </div>
      </div>

      {/* ===== Estocastico ===== */}
      <div className="flex h-[103px]">
        <Panel className="h-[99px]">
          <div className="w-[49px] shrink-0 pr-[4px] text-right text-[12.5px]">
            <div className="mt-[3px] leading-[14px]">100</div>
            <div className="mt-[10px] leading-[14px]">60</div>
            <div className="mt-[6px] leading-[14px]">40</div>
            <div className="mt-[25px] leading-[14px]">0</div>
          </div>
          <div className="relative mt-[2px] w-[824px] h-[95px] shrink-0">
            <StochPlot />
            <span className="absolute left-[10px] -top-[2px] text-[12.5px] text-[#c8c8c8]">Full Estocastico</span>
          </div>
          <div className="pl-[3px] leading-[11.5px] whitespace-nowrap">
            <div>EST. %</div>
            <div>FULL</div>
            <div>(28,3,6)</div>
            <div className="mt-[18px] ml-[2px] leading-[14px] text-[#1a1ae8]">34,25</div>
            <div className="ml-[2px] leading-[14px] text-[#c8c8c8]">20,09</div>
          </div>
        </Panel>
        <div className="ml-[9px] flex flex-col items-center">
          <Radio className="mt-[3px]" />
          <SideBtn icon="arrows" className="mt-[7px]" />
          <SideBtn icon="lines" className="mt-[3px]" />
          <SideBtn icon="curves" className="mt-[3px]" />
        </div>
      </div>

      {/* ===== Footer ===== */}
      <div className="-mt-[5px] h-[28px] pl-[20px] flex items-center">
        <span className="w-[286px] shrink-0 text-[12.5px] text-[#333]">BESI (BESI.AS)</span>
        <span className="w-[613px] shrink-0 text-[13.5px] text-[#1a1ae8]">/Users/mserra/Library/CloudStorage/Dropbox/WorkDB/DatosBolsa/Configs/Config.DEFAULT.xml</span>
        <div className="w-[66px] h-[18px] border-2 border-[#a9a9a9] bg-[#f00000] text-white pl-[3px] leading-[15px] text-[11.5px]">OFF</div>
      </div>
    </div>
  );
}
